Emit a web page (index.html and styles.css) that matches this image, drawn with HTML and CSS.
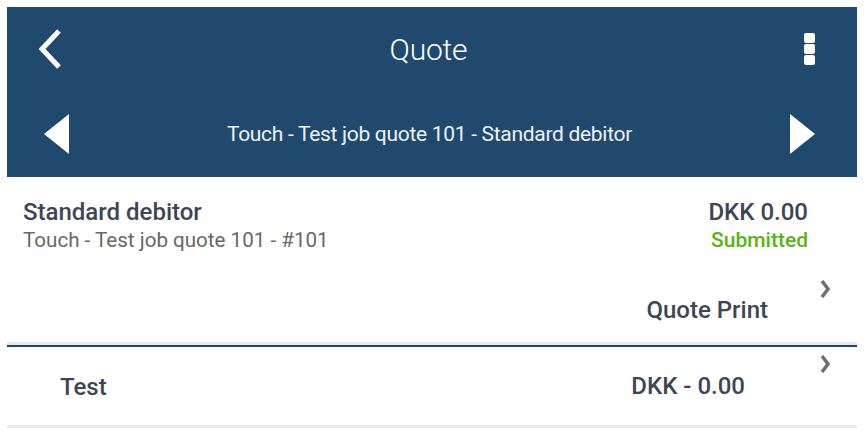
FILE: index.html
```html
<!DOCTYPE html>
<html>
<head>
<meta charset="utf-8">
<link rel="stylesheet" href="styles.css">
</head>
<body>
<div class="page">
  <header class="appbar">
    <div class="topbar">
      <button class="icon-btn back" aria-label="Back">
        <svg width="26" height="42" viewBox="0 0 26 42"><path d="M22 3 L5 21 L22 39" fill="none" stroke="#fff" stroke-width="5"/></svg>
      </button>
      <h1 class="title">Quote</h1>
      <div class="menu-wrap">
        <button class="icon-btn menu" aria-label="Menu">
          <span class="dot"></span><span class="dot"></span><span class="dot"></span>
        </button>
      </div>
    </div>
    <div class="navbar">
      <button class="icon-btn" aria-label="Previous">
        <svg width="26" height="42" viewBox="0 0 26 42"><path d="M25 1 L0 21 L25 41 Z" fill="#fff"/></svg>
      </button>
      <div class="subtitle">Touch - Test job quote 101 - Standard debitor</div>
      <button class="icon-btn" aria-label="Next">
        <svg width="26" height="42" viewBox="0 0 26 42"><path d="M1 1 L26 21 L1 41 Z" fill="#fff"/></svg>
      </button>
    </div>
  </header>

  <section class="summary">
    <div class="summary-main">
      <div class="left">
        <div class="name">Standard debitor</div>
        <div class="ref">Touch - Test job quote 101 - #101</div>
      </div>
      <div class="right">
        <div class="amount">DKK 0.00</div>
        <div class="status">Submitted</div>
      </div>
    </div>
    <div class="print-row">
      <span class="print-label">Quote Print</span>
      <svg class="chev" width="10" height="18" viewBox="0 0 10 18"><path d="M2 1 L8 9 L2 17" fill="none" stroke="#707070" stroke-width="3.5"/></svg>
    </div>
  </section>

  <div class="line-row">
    <span class="line-name">Test</span>
    <span class="line-amount">DKK - 0.00</span>
    <svg class="chev" width="10" height="18" viewBox="0 0 10 18"><path d="M2 1 L8 9 L2 17" fill="none" stroke="#707070" stroke-width="3.5"/></svg>
  </div>
</div>
</body>
</html>
```

FILE: styles.css
```css
* { box-sizing: border-box; }
html, body { background: #fff; }
body {
  margin: 7px 8px 0 7px;
  font-family: Roboto, "Noto Sans", sans-serif;
}
.appbar {
  background: #1f4a6e;
  color: #fff;
  height: 170px;
  display: flex;
  flex-direction: column;
}
.icon-btn {
  background: none;
  border: 0;
  padding: 0;
  display: flex;
  align-items: center;
  justify-content: center;
  cursor: pointer;
}
.topbar {
  height: 84px;
  display: grid;
  grid-template-columns: 1fr auto 1fr;
  align-items: center;
  padding: 0 42px 0 30px;
}
.back { justify-self: start; }
.menu-wrap { justify-self: end; display: flex; }
.title {
  margin: 0;
  font-size: 30px;
  font-weight: 300;
  letter-spacing: -0.2px;
  color: #fff;
  padding-left: 5px;
}
.back svg { display: block; }
.menu {
  flex-direction: column;
  gap: 1px;
  width: 12px;
}
.dot {
  display: block;
  width: 11px;
  height: 10px;
  background: #fff;
  border-radius: 2px;
}
.navbar {
  flex: 1;
  display: flex;
  align-items: center;
  justify-content: space-between;
  padding: 0 42px 0 37px;
}
.subtitle {
  font-size: 21px;
  letter-spacing: -0.3px;
  color: #eef2f6;
}
.summary-main {
  display: flex;
  justify-content: space-between;
  padding: 21px 49px 0 16px;
}
.name {
  font-size: 24px;
  font-weight: 500;
  color: #3c4656;
  line-height: 28px;
}
.ref {
  font-size: 20.6px;
  color: #686868;
  line-height: 28px;
}
.right { text-align: right; }
.amount {
  font-size: 24px;
  font-weight: 500;
  color: #3c4656;
  line-height: 28px;
}
.status {
  font-size: 21px;
  font-weight: 500;
  color: #5ab312;
  line-height: 28px;
}
.print-row {
  position: relative;
  display: flex;
  justify-content: flex-end;
  padding: 42px 89px 18px 0;
  border-bottom: 3px solid #e8e8e8;
}
.print-label {
  font-size: 24px;
  font-weight: 500;
  line-height: 28px;
  color: #3c4656;
}
.chev {
  position: absolute;
}
.print-row .chev { right: 27px; top: 26px; }
.line-row {
  position: relative;
  border-top: 2px solid #1f4a6e;
  border-bottom: 3px solid #e8e8e8;
  height: 83px;
  display: flex;
  align-items: center;
  padding: 0 112px 0 53px;
  justify-content: space-between;
}
.line-name {
  font-size: 24px;
  font-weight: 500;
  color: #3c4656;
  padding-top: 2px;
}
.line-amount {
  font-size: 24px;
  font-weight: 500;
  color: #3c4656;
}
.line-row .chev { right: 27px; top: 8px; }
```
